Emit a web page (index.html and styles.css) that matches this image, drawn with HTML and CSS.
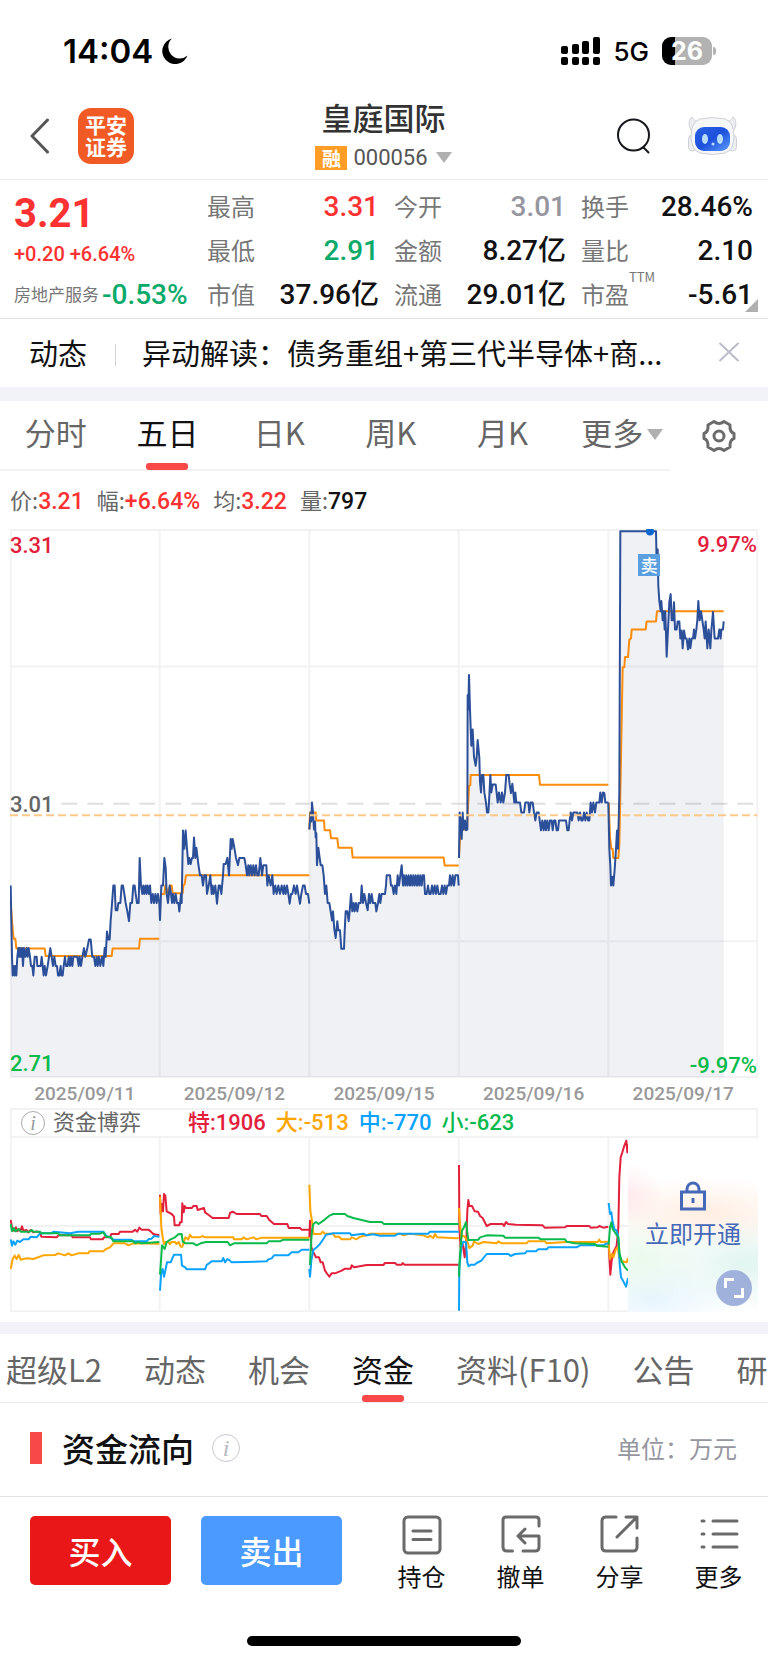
FILE: index.html
```html
<!DOCTYPE html>
<html lang="zh-CN">
<head>
    <meta charset="UTF-8">
    <meta name="viewport" content="width=device-width, initial-scale=1.0">
    <title>皇庭国际 000056</title>
    <link rel="stylesheet" href="styles.css">
</head>
<body>

    <div class="status-bar">
        <div class="status-left">
            <span class="clock">14:04</span>
            <svg class="moon" viewBox="0 0 26 26"><path d="M10 0.5A13 13 0 1 0 25.5 17.5A10.5 10.5 0 0 1 10 0.5Z" fill="#000"/></svg>
        </div>
        <div class="status-right">
            <svg class="signal" viewBox="0 0 39 28">
                <rect x="0" y="9" width="7" height="8" rx="2"/>
                <rect x="11" y="7" width="7" height="10" rx="2"/>
                <rect x="21" y="4" width="7" height="13" rx="2"/>
                <rect x="32" y="0" width="7" height="17" rx="2"/>
                <rect x="0" y="20" width="7" height="8" rx="2"/>
                <rect x="11" y="20" width="7" height="8" rx="2"/>
                <rect x="21" y="20" width="7" height="8" rx="2"/>
                <rect x="32" y="20" width="7" height="8" rx="2"/>
            </svg>
            <span class="network">5G</span>
            <span class="battery">26</span>
        </div>
    </div>

    <header class="header">
        <div class="header-left">
            <a class="back" href="#" aria-label="返回">
                <svg viewBox="0 0 20 36"><path d="M17.500 2L2 18L17.500 34" fill="none" stroke="#555" stroke-width="3" stroke-linecap="round" stroke-linejoin="round"/></svg>
            </a>
            <a class="logo" href="#">平安<br>证券</a>
        </div>
        <div class="stock">
            <h1 class="stock-name">皇庭国际</h1>
            <button class="stock-code"><span class="tag">融</span>000056<span class="arrow-down"></span></button>
        </div>
        <div class="header-right">
            <button class="search" aria-label="搜索">
                <svg viewBox="0 0 34 36"><circle cx="16.500" cy="17" r="15.500"/><path d="M26.500 29.500L31.500 34.500"/></svg>
            </button>
            <button class="robot" aria-label="智能助手">
                <svg viewBox="0 0 49 40">
                    <defs>
                        <linearGradient id="face" x1="0" y1="0" x2="1" y2="1">
                            <stop offset="0" stop-color="#2a62e4"/>
                            <stop offset="0.500" stop-color="#1d50dc"/>
                            <stop offset="1" stop-color="#5b9dfc"/>
                        </linearGradient>
                    </defs>
                    <g fill="#eceef2" stroke="#cdd0d6">
                        <path d="M3 14C0 9 1 3 4 1C6 5 8 6 14 5L10 13Z"/>
                        <path d="M46 14C49 9 48 3 45 1C43 5 41 6 35 5L39 13Z"/>
                        <rect x="0.500" y="19" width="8" height="16" rx="4"/>
                        <rect x="40.500" y="19" width="8" height="16" rx="4"/>
                        <path d="M12 3Q24.500 0 37 3Q46 6 46 20Q46 34 37 37Q24.500 40 12 37Q3 34 3 20Q3 6 12 3Z" fill="#f5f6f8"/>
                    </g>
                    <rect x="7" y="11" width="35" height="24" rx="9" fill="url(#face)"/>
                    <g fill="#b9dcff">
                        <ellipse cx="17" cy="23" rx="3" ry="5"/>
                        <ellipse cx="32" cy="23" rx="3" ry="5"/>
                        <circle cx="25" cy="28" r="1.500"/>
                    </g>
                </svg>
            </button>
        </div>
    </header>

    <section class="quote">
        <div class="quote-main">
            <div class="price">3.21</div>
            <div class="change">+0.20 +6.64%</div>
            <div class="industry">房地产服务<b>-0.53%</b></div>
        </div>
        <dl class="quote-col">
            <div><dt>最高</dt><dd class="up">3.31</dd></div>
            <div><dt>最低</dt><dd class="down">2.91</dd></div>
            <div><dt>市值</dt><dd>37.96亿</dd></div>
        </dl>
        <dl class="quote-col">
            <div><dt>今开</dt><dd class="flat">3.01</dd></div>
            <div><dt>金额</dt><dd>8.27亿</dd></div>
            <div><dt>流通</dt><dd>29.01亿</dd></div>
        </dl>
        <dl class="quote-col">
            <div><dt>换手</dt><dd>28.46%</dd></div>
            <div><dt>量比</dt><dd>2.10</dd></div>
            <div><dt>市盈<sup>TTM</sup></dt><dd>-5.61</dd></div>
        </dl>
    </section>

    <div class="news">
        <span class="news-tag">动态</span>
        <a class="news-title" href="#">异动解读：债务重组+第三代半导体+商...</a>
        <button class="news-close" aria-label="关闭">
            <svg viewBox="0 0 22 22"><path d="M1.500 2L20.500 20M20.500 2L1.500 20" stroke="#bcbccb" stroke-width="2"/></svg>
        </button>
    </div>

    <div class="period">
        <nav class="period-tabs">
            <a href="#">分时</a>
            <a href="#" class="active">五日</a>
            <a href="#">日K</a>
            <a href="#">周K</a>
            <a href="#">月K</a>
            <a href="#" class="more">更多<span class="arrow-down"></span></a>
        </nav>
        <button class="settings" aria-label="设置">
            <svg viewBox="0 0 34 34">
                <path d="M12 2.500Q14.500 4.500 17 4.500T22 2.500L28 6Q27.500 13 32 14.500V19.500Q27.500 21 28 28L22 31.500Q19.500 29.500 17 29.500T12 31.500L6 28Q6.500 21 2 19.500V14.500Q6.500 13 6 6Z"/>
                <circle cx="17" cy="17" r="5"/>
            </svg>
        </button>
    </div>

    <p class="readout">
        <span>价:<b class="up">3.21</b></span>
        <span>幅:<b class="up">+6.64%</b></span>
        <span>均:<b class="up">3.22</b></span>
        <span>量:<b>797</b></span>
    </p>

    <section class="charts">
        <div class="chart">
            <svg id="price-chart" class="price-chart" viewBox="30 24 2244 1509" preserveAspectRatio="none">
                <path class="grid" d="M32 27H2272V1530H32ZM32 402H2272M32 1157H2272M479 27V1530M928 27V1530M1376 27V1530M1825 27V1530"/>
                <path class="grid dash-close" d="M184 779H2272"/>
                <g class="lines"></g>
                <path class="dash-cost" d="M30 811H2272"/>
                <ellipse cx="1950" cy="31" rx="12" ry="11" fill="#0a66d0"/>
            </svg>
            <span class="label label-high">3.31</span>
            <span class="label label-mid">3.01</span>
            <span class="label label-low">2.71</span>
            <span class="label label-high-pct">9.97%</span>
            <span class="label label-low-pct">-9.97%</span>
            <span class="sell-mark">卖</span>
        </div>

        <div class="dates">
            <span>2025/09/11</span>
            <span>2025/09/12</span>
            <span>2025/09/15</span>
            <span>2025/09/16</span>
            <span>2025/09/17</span>
        </div>

        <div class="flow-head">
            <span class="info">i</span>
            <span class="flow-name">资金博弈</span>
            <span class="huge">特:1906</span>
            <span class="large">大:-513</span>
            <span class="medium">中:-770</span>
            <span class="small">小:-623</span>
        </div>

        <div class="chart">
            <svg id="flow-chart" class="flow-chart" viewBox="30 172 2244 522" preserveAspectRatio="none">
                <path class="grid" d="M32 170V692H2272V170M32 436H2272M479 172V692M928 172V692M1376 172V692M1825 172V692"/>
                <g class="lines"></g>
            </svg>
            <a class="unlock" href="#">
                <svg viewBox="0 0 26 30"><path d="M7 11V8A6 6 0 0 1 19 8V11M1.500 11H24.500V28H1.500ZM13 17V22" fill="none" stroke="#4668b8" stroke-width="3"/></svg>
                立即开通
            </a>
            <button class="expand" aria-label="全屏">
                <svg viewBox="0 0 36 36"><path d="M9.500 18V9.500H18M18 26.500H26.500V18" fill="none" stroke="#fff" stroke-width="3"/></svg>
            </button>
        </div>
    </section>

    <nav class="detail-tabs">
        <a href="#">超级L2</a>
        <a href="#">动态</a>
        <a href="#">机会</a>
        <a href="#" class="active">资金</a>
        <a href="#">资料(F10)</a>
        <a href="#">公告</a>
        <a href="#">研报</a>
    </nav>

    <section class="fund">
        <h2 class="fund-title">资金流向</h2>
        <span class="info">i</span>
        <span class="unit">单位：万元</span>
    </section>

    <footer class="toolbar">
        <button class="trade buy">买入</button>
        <button class="trade sell">卖出</button>
        <div class="tools">
            <a href="#">
                <svg viewBox="0 0 40 40"><rect x="2" y="2" width="36" height="36" rx="4"/><path d="M11 16H29M11 24.500H29"/></svg>
                持仓
            </a>
            <a href="#">
                <svg viewBox="0 0 40 40"><path d="M38 11V5Q38 2 35 2H5Q2 2 2 5V32Q2 36 6 36H11.500M22 36H34Q38 36 38 32V21H18M24 14L17 21L24 28"/></svg>
                撤单
            </a>
            <a href="#">
                <svg viewBox="0 0 40 40"><path d="M16 2H6Q2 2 2 6V32Q2 36 6 36H33Q37 36 37 32V23M26 2H37V13M37 2L17 22"/></svg>
                分享
            </a>
            <a href="#">
                <svg viewBox="0 0 40 40"><path d="M3 6H5M14 6H38M3 19H5M14 19H38M3 32H5M14 32H38"/></svg>
                更多
            </a>
        </div>
    </footer>
    <div class="home-bar"></div>

    <script src="chart.js"></script>
</body>
</html>
```
FILE: styles.css
```css
* {
    box-sizing: border-box;
}

body {
    margin: 0;
    background-color: #fff;
    color: #111;
    font-family: "Noto Sans CJK SC", sans-serif;
    font-size: 24px;
    overflow-x: hidden;
}

a {
    color: inherit;
    text-decoration: none;
}

button {
    padding: 0;
    border: none;
    background: none;
    color: inherit;
    font: inherit;
    cursor: pointer;
}

svg {
    display: block;
}

h1, h2, p, dl, dd {
    margin: 0;
}

.up {
    color: #fc3232;
}

.down {
    color: #0aaa6a;
}

.flat {
    color: #96969f;
}

.arrow-down {
    display: inline-block;
    border: 8px solid transparent;
    border-top: 11px solid #b0b0b0;
    border-bottom: none;
}

/* status bar */
.status-bar {
    display: flex;
    justify-content: space-between;
    align-items: center;
    height: 90px;
    padding: 12px 56px 0 63px;
    font-family: Inter, sans-serif;
    color: #000;
}

.status-left,
.status-right {
    display: flex;
    align-items: center;
}

.clock {
    font-size: 33px;
    font-weight: 600;
}

.moon {
    width: 26px;
    height: 26px;
    margin-left: 9px;
}

.signal {
    width: 39px;
    height: 28px;
}

.network {
    margin: 0 13px;
    font-size: 26px;
    font-weight: 500;
}

.battery {
    position: relative;
    width: 50px;
    height: 28px;
    border-radius: 9px;
    background: linear-gradient(90deg, #000 13px, #b2b2b2 13px);
    color: #fff;
    font-size: 25px;
    font-weight: 700;
    line-height: 28px;
    text-align: center;
}

.battery::after {
    content: "";
    position: absolute;
    left: 51px;
    top: 10px;
    width: 3px;
    height: 8px;
    border-radius: 0 3px 3px 0;
    background-color: #b2b2b2;
}

/* header */
.header {
    display: grid;
    grid-template-columns: 1fr auto 1fr;
    align-items: center;
    height: 90px;
    padding: 3px 31px 0 30px;
    border-bottom: 1px solid #ececee;
}

.header-left,
.header-right {
    display: flex;
    align-items: center;
}

.header-right {
    justify-content: flex-end;
    gap: 37px;
}

.back svg {
    width: 20px;
    height: 36px;
}

.logo {
    width: 56px;
    height: 56px;
    margin-left: 28px;
    padding-top: 5px;
    border-radius: 13px;
    background-color: #f15a24;
    color: #fff;
    font-size: 21px;
    font-weight: 700;
    line-height: 22px;
    text-align: center;
}

.stock {
    text-align: center;
}

.stock-name {
    color: #333;
    font-size: 31px;
    font-weight: 500;
    line-height: 43px;
}

.stock-code {
    display: flex;
    align-items: center;
    color: #555;
    font-family: Roboto, sans-serif;
    font-size: 22px;
    line-height: 40px;
}

.tag {
    width: 32px;
    height: 24px;
    margin-right: 6px;
    background-color: #ff9d26;
    color: #fff;
    font-family: "Noto Sans CJK SC", sans-serif;
    font-size: 19px;
    font-weight: 700;
    line-height: 23px;
}

.stock-code .arrow-down {
    margin-left: 8px;
}

.search svg {
    width: 34px;
    height: 36px;
    fill: none;
    stroke: #15171c;
    stroke-width: 2;
    stroke-linecap: round;
}

.robot svg {
    width: 49px;
    height: 40px;
}

/* quote */
.quote {
    position: relative;
    display: grid;
    grid-template-columns: 178px 1fr 1fr 1fr;
    gap: 15px;
    padding: 5px 15px 1px 14px;
    border-bottom: 1px solid #dfe0e6;
}

.quote::after {
    content: "";
    position: absolute;
    right: 10px;
    bottom: 6px;
    border-left: 13px solid transparent;
    border-bottom: 13px solid #b0b0b0;
}

.quote-main {
    display: grid;
    grid-template-rows: 56px 26px 50px;
    align-items: center;
    color: #fc3232;
    font-family: Roboto, "Noto Sans CJK SC", sans-serif;
    white-space: nowrap;
}

.price {
    font-size: 40px;
    font-weight: 700;
}

.change {
    font-size: 20px;
    font-weight: 500;
}

.industry {
    display: flex;
    align-items: center;
    gap: 3px;
    padding-top: 6px;
    color: #777;
    font-size: 17px;
    line-height: 44px;
}

.industry b {
    color: #0aaa6a;
    font-size: 28px;
    font-weight: 500;
}

.quote-col > div {
    display: flex;
    justify-content: space-between;
    height: 44px;
    line-height: 44px;
    white-space: nowrap;
}

.quote-col dt {
    position: relative;
    color: #777;
    line-height: 42px;
}

.quote-col dd {
    font-family: Roboto, "Noto Sans CJK SC", sans-serif;
    font-size: 28px;
    font-weight: 500;
}

.quote-col sup {
    position: absolute;
    left: 48px;
    top: -4px;
    font-size: 13px;
    line-height: 16px;
}

/* news */
.news {
    display: flex;
    align-items: center;
    height: 82px;
    padding: 0 28px 2px 29px;
    border-bottom: 14px solid #f2f3f9;
    font-size: 29px;
}

.news-tag {
    margin-right: 28px;
}

.news-title {
    position: relative;
    flex: 1;
    padding-left: 27px;
    white-space: nowrap;
}

.news-title::before {
    content: "";
    position: absolute;
    left: 0;
    top: 13px;
    width: 1px;
    height: 22px;
    background-color: #d4d4da;
}

.news-close svg {
    width: 22px;
    height: 22px;
}

/* period tabs */
.period {
    display: flex;
    align-items: center;
    height: 70px;
}

.period-tabs {
    flex: 1;
    display: grid;
    grid-template-columns: repeat(6, 1fr);
    height: 69px;
    border-bottom: 2px solid #f2f2f4;
    color: #666;
    font-size: 31px;
    line-height: 59px;
    text-align: center;
}

.period-tabs a,
.detail-tabs a {
    position: relative;
    white-space: nowrap;
}

.period-tabs .more {
    padding-left: 16px;
}

.period-tabs .arrow-down {
    margin-left: 4px;
    vertical-align: 5px;
}

.period-tabs .active,
.detail-tabs .active {
    color: #111;
}

.active::after {
    content: "";
    position: absolute;
    left: calc(50% - 21px);
    bottom: -1px;
    width: 42px;
    height: 7px;
    border-radius: 3px;
    background-color: #f94848;
}

.settings {
    width: 98px;
}

.settings svg {
    width: 34px;
    height: 34px;
    margin: 0 auto;
    fill: none;
    stroke: #6b6b6b;
    stroke-width: 3;
    stroke-linejoin: round;
}

/* chart */
.readout {
    display: flex;
    gap: 13px;
    height: 58px;
    padding-left: 10px;
    color: #666;
    font-size: 22px;
    line-height: 56px;
}

.readout b {
    font-family: Roboto, sans-serif;
    font-size: 23px;
    font-weight: 500;
}

.readout b:not(.up) {
    color: #111;
}

.charts {
    padding: 0 10px 10px;
    border-bottom: 12px solid #f2f3f9;
}

.chart {
    position: relative;
}

.price-chart,
.flow-chart {
    width: 100%;
}

.price-chart {
    aspect-ratio: 748 / 549;
}

.flow-chart {
    aspect-ratio: 748 / 174;
}

.price-chart *,
.flow-chart * {
    fill: none;
    vector-effect: non-scaling-stroke;
}

.price-chart ellipse {
    fill: #0a66d0;
}

.grid {
    stroke: #f2f2f3;
    stroke-width: 2;
}

.grid.dash-close {
    stroke: #dfdfdf;
    stroke-dasharray: 16 10;
}

.dash-cost {
    stroke: #fdc98a;
    stroke-width: 2;
    stroke-dasharray: 8 4;
}

.price-chart .area {
    fill: rgba(60, 75, 130, 0.08);
}

.lines polyline {
    stroke-width: 2;
    stroke-linejoin: round;
}

.line-price { stroke: #2c4f99; }
.line-average { stroke: #fb8c0c; }
.line-huge { stroke: #e2203c; }
.line-large { stroke: #ffa500; }
.line-medium { stroke: #0aa2ff; }
.line-small { stroke: #0aba4c; }

.label {
    position: absolute;
    font-family: Roboto, sans-serif;
    font-size: 22px;
    font-weight: 500;
    line-height: 24px;
}

.label-high {
    left: 0;
    top: 5px;
    color: #e2203c;
}

.label-mid {
    left: 0;
    top: 48%;
    color: #666;
}

.label-low {
    left: 0;
    bottom: 2px;
    color: #0aba4c;
}

.label-high-pct {
    right: 1px;
    top: 4px;
    color: #e2203c;
}

.label-low-pct {
    right: 1px;
    bottom: 0;
    color: #0aba4c;
}

.sell-mark {
    position: absolute;
    left: 84%;
    top: 25px;
    width: 22px;
    height: 22px;
    background-color: #5b9fe0;
    color: #fff;
    font-size: 17px;
    font-weight: 500;
    line-height: 21px;
    text-align: center;
}

.dates {
    display: grid;
    grid-template-columns: repeat(5, 1fr);
    height: 30px;
    color: #999;
    font-family: Roboto, sans-serif;
    font-size: 19px;
    font-weight: 500;
    line-height: 32px;
    text-align: center;
}

.flow-head {
    display: flex;
    align-items: center;
    gap: 10px;
    height: 30px;
    padding-left: 9px;
    border: 2px solid #f2f2f2;
    font-family: Roboto, "Noto Sans CJK SC", sans-serif;
    font-size: 22px;
    font-weight: 500;
    line-height: 26px;
}

.info {
    width: 24px;
    height: 24px;
    border: 1px solid #aaa;
    border-radius: 50%;
    color: #999;
    font-family: "Liberation Serif", serif;
    font-size: 20px;
    font-style: italic;
    line-height: 22px;
    text-align: center;
}

.flow-name {
    margin: 0 37px 0 -2px;
    color: #666;
    font-weight: 400;
}

.huge { color: #e2203c; }
.large { color: #ffa500; }
.medium { color: #0aa2ff; }
.small { color: #0aba4c; }

.unlock {
    position: absolute;
    right: 0;
    top: 1px;
    bottom: 0;
    display: flex;
    flex-direction: column;
    align-items: center;
    width: 130px;
    padding-top: 42px;
    background:
        radial-gradient(ellipse at 0 56px, rgba(255, 215, 222, 0.5), transparent 36px),
        radial-gradient(ellipse 110px 36px at 60% 74px, rgba(255, 226, 206, 0.6), transparent),
        radial-gradient(ellipse 100px 50px at 90% 124px, rgba(205, 238, 230, 0.6), transparent),
        radial-gradient(ellipse 60px 50px at 10% 120px, rgba(220, 246, 224, 0.6), transparent),
        radial-gradient(ellipse 80px 36px at 20% 160px, rgba(215, 238, 255, 0.6), transparent),
        #fff;
    color: #4668b8;
    line-height: 40px;
}

.unlock svg {
    width: 26px;
    height: 30px;
    margin-bottom: 2px;
}

.expand {
    position: absolute;
    right: 6px;
    bottom: 6px;
    width: 36px;
    height: 36px;
    border-radius: 50%;
    background-color: #a0b2dc;
}

/* detail tabs */
.detail-tabs {
    display: flex;
    gap: 42px;
    height: 69px;
    padding-left: 6px;
    border-bottom: 1px solid #ececee;
    overflow: hidden;
    color: #666;
    font-size: 31px;
    line-height: 69px;
}

.detail-tabs .active::after {
    bottom: 0;
}

.fund {
    display: flex;
    align-items: center;
    height: 94px;
    padding: 0 31px 4px 30px;
    border-bottom: 1px solid #e4e4e6;
}

.fund-title {
    display: flex;
    align-items: center;
    gap: 20px;
    font-size: 33px;
    font-weight: 500;
}

.fund-title::before {
    content: "";
    width: 12px;
    height: 32px;
    background-color: #f94848;
}

.fund .info {
    width: 28px;
    height: 28px;
    margin-left: 18px;
    border-color: #c8c8d2;
    color: #b8b8c2;
    font-size: 24px;
    line-height: 26px;
}

.unit {
    margin-left: auto;
    color: #96969f;
}

/* bottom toolbar */
.toolbar {
    display: flex;
    align-items: flex-start;
    gap: 30px;
    height: 139px;
    padding: 19px 0 0 30px;
}

.trade {
    width: 141px;
    height: 69px;
    padding-bottom: 2px;
    border-radius: 5px;
    color: #fff;
    font-size: 32px;
    font-weight: 500;
}

.buy {
    background-color: #ea1718;
}

.sell {
    background-color: #4a9aff;
}

.tools {
    flex: 1;
    display: grid;
    grid-template-columns: repeat(4, 1fr);
    line-height: 42px;
    text-align: center;
}

.tools svg {
    width: 40px;
    height: 40px;
    margin: -1px auto 0;
    fill: none;
    stroke: #6a6a6a;
    stroke-width: 3;
    stroke-linecap: round;
    stroke-linejoin: round;
}

.home-bar {
    width: 274px;
    height: 10px;
    margin: 0 auto 17px;
    border-radius: 5px;
    background-color: #000;
}
```
FILE: chart.js
```javascript
// one entry per trading day
const price = [
    "32,1004 36,1200 38,1251 42,1225 44,1251 46,1225 49,1251 52,1200 55,1176 58,1200 60,1176 63,1200 66,1176 69,1225 72,1176 76,1200 80,1176 83,1200 86,1176 90,1200 93,1225 97,1225 100,1251 104,1200 110,1200 112,1225 122,1225 125,1200 128,1225 131,1251 134,1225 138,1251 143,1225 147,1200 151,1176 155,1200 159,1225 163,1200 167,1225 171,1225 174,1251 178,1251 182,1225 184,1251 188,1251 191,1225 195,1200 198,1225 203,1225 206,1200 210,1225 213,1200 217,1225 220,1200 232,1200 236,1225 239,1200 243,1225 247,1200 252,1176 256,1200 262,1176 267,1152 272,1152 277,1200 282,1200 286,1225 290,1200 293,1225 297,1200 301,1225 306,1200 310,1225 314,1176 317,1200 321,1130 325,1152 329,1152 332,1100 336,1054 340,1004 344,1004 347,1072 352,1072 355,1052 361,1052 365,1004 369,1004 373,1027 377,1052 382,1075 387,1102 391,1052 396,1052 400,1004 404,1004 407,1027 411,1052 416,1052 419,928 423,1004 427,1027 430,1004 433,1027 437,1004 440,1027 443,1004 447,1027 450,1004 454,1052 458,1027 462,1052 466,1027 470,1052 474,1027 478,1052 480,1100",
    "480,1100 484,1004 489,1004 493,928 497,955 500,1027 504,1052 509,1004 513,1027 516,1052 519,1027 523,1052 527,1027 531,1052 535,1052 538,1075 543,1027 545,1052 549,853 553,903 557,853 561,903 565,945 568,928 572,945 576,928 579,928 582,872 586,928 589,900 595,945 600,976 605,976 609,1004 613,976 618,976 621,1027 626,1004 631,976 635,1027 638,1004 641,1027 646,1004 651,1054 656,1004 660,1004 664,1027 669,976 671,945 677,945 682,928 687,976 692,876 695,903 698,876 703,900 708,928 714,948 718,928 733,928 737,948 741,976 745,948 748,976 752,948 756,976 760,948 764,976 768,948 772,976 776,976 781,928 786,976 790,948 799,948 802,1004 806,976 812,1004 817,976 821,1027 826,1004 830,1027 835,1004 840,1027 845,1004 850,1027 853,1004 857,1027 861,1004 865,1027 869,1054 873,1027 877,1027 882,1004 887,1027 891,1004 895,1027 900,1054 904,1027 909,1004 914,1004 918,1027 924,1027 928,1054",
    "928,850 932,803 934,828 936,776 939,803 942,850 945,828 947,872 949,860 951,948 955,900 959,928 962,948 967,948 971,976 975,1027 979,1004 983,1052 988,1052 992,1075 996,1100 999,1075 1003,1125 1007,1148 1012,1102 1015,1127 1020,1127 1024,1178 1032,1178 1034,1130 1037,1075 1042,1075 1046,1102 1049,1075 1053,1027 1057,1075 1061,1052 1064,1075 1068,1052 1072,1075 1076,1052 1082,1052 1085,1004 1089,1052 1093,1027 1098,1052 1103,1072 1107,1027 1111,1052 1115,1027 1119,1052 1126,1052 1129,1075 1134,1052 1138,1027 1141,1052 1145,1027 1155,1027 1158,1004 1160,976 1170,976 1173,1004 1177,1004 1181,1027 1185,1004 1189,1027 1193,976 1197,1004 1201,976 1205,948 1209,1004 1212,976 1216,1004 1219,976 1223,1004 1226,976 1230,1004 1233,976 1237,1004 1240,976 1244,1004 1247,976 1251,1004 1254,976 1258,1004 1261,976 1265,1004 1268,976 1272,976 1275,1027 1280,1027 1284,1004 1288,1027 1292,1027 1296,1004 1300,1027 1304,1004 1308,1027 1312,1004 1316,1027 1322,1027 1326,1004 1330,1027 1334,1004 1338,1027 1342,1004 1347,1004 1350,976 1354,1004 1358,976 1362,1004 1366,976 1374,976 1376,1004",
    "1377,928 1379,803 1382,828 1385,876 1388,803 1391,850 1395,825 1398,852 1402,850 1403,480 1405,520 1407,425 1410,520 1414,620 1418,575 1422,650 1427,675 1430,652 1433,604 1438,652 1440,720 1443,748 1446,700 1450,700 1453,748 1458,776 1461,803 1465,803 1467,776 1471,700 1474,748 1478,726 1487,726 1490,750 1493,776 1497,748 1502,776 1506,748 1510,776 1515,748 1519,700 1526,700 1529,726 1533,750 1537,724 1540,750 1543,776 1546,748 1549,776 1560,776 1564,803 1572,803 1576,776 1585,776 1588,803 1592,776 1598,776 1602,803 1606,825 1610,803 1616,803 1619,825 1623,852 1627,825 1631,852 1635,825 1638,852 1642,825 1646,852 1650,825 1655,825 1658,852 1662,825 1666,825 1670,852 1674,852 1677,825 1698,825 1702,852 1706,852 1709,825 1712,803 1716,825 1720,803 1732,803 1736,825 1740,803 1744,825 1748,825 1752,803 1756,825 1760,803 1764,825 1768,825 1772,776 1776,803 1780,776 1785,803 1789,776 1798,776 1801,748 1805,776 1809,748 1813,750 1816,776 1825,776",
    "1825,776 1828,903 1831,950 1833,1004 1837,980 1840,1004 1844,960 1848,903 1851,853 1854,903 1858,750 1861,30 1968,30 1970,120 1973,80 1975,180 1978,222 1982,250 1984,222 1988,275 1991,250 1994,300 1996,250 2000,375 2004,300 2008,225 2012,203 2015,275 2019,275 2022,225 2025,300 2030,300 2033,278 2038,278 2041,325 2045,303 2048,352 2052,303 2056,325 2060,325 2064,355 2068,325 2071,352 2075,325 2079,325 2082,300 2085,325 2089,300 2092,275 2095,222 2099,275 2103,250 2107,275 2111,300 2114,325 2117,278 2122,352 2126,300 2131,352 2134,303 2139,252 2144,325 2154,325 2158,300 2162,325 2164,300 2169,300 2171,278"
];

const average = [
    "32,1050 38,1125 41,1150 46,1150 49,1177 134,1177 137,1198 335,1198 338,1177 417,1177 420,1150 478,1150",
    "480,1027 493,1027 496,1004 505,1027 510,1004 515,1004 518,1025 548,1025 550,1004 554,1000 558,976 928,976",
    "928,850 930,803 947,803 949,825 972,825 974,852 990,852 993,874 1012,874 1015,900 1055,900 1058,927 1331,927 1334,949 1376,949",
    "1377,928 1381,850 1401,850 1407,730 1411,728 1412,700 1617,700 1620,727 1825,727",
    "1826,776 1830,870 1834,903 1838,903 1840,928 1855,928 1858,890 1862,700 1868,404 1873,404 1875,376 1884,376 1888,328 1893,325 1895,300 1937,300 1940,278 1968,278 1971,250 2171,250"
];

const flow = {
    huge: [
        "32,418 36,440 42,450 48,440 52,452 58,445 62,450 66,437 70,450 80,448 85,455 92,448 100,455 110,452 120,455 124,468 170,470 175,464 215,464 218,470 270,470 273,476 308,476 312,470 330,470 334,460 356,460 360,453 398,453 405,447 412,453 418,441 424,447 445,447 452,452 460,460 478,464",
        "480,342 482,400 486,370 489,392 492,340 496,345 500,392 515,400 522,408 524,434 538,434 540,425 545,425 547,368 551,395 554,376 558,382 576,382 580,376 590,376 593,388 612,382 615,395 622,400 638,412 686,412 690,397 698,393 710,400 780,400 784,406 800,406 808,418 822,430 862,430 866,442 900,442 905,447 928,447",
        "928,470 930,420 934,500 940,515 948,530 957,530 962,545 968,545 975,570 982,580 988,588 995,578 1005,578 1025,570 1035,564 1052,564 1055,554 1063,560 1100,553 1150,553 1155,547 1185,547 1190,552 1205,552 1208,547 1213,552 1376,552",
        "1377,253 1378,440 1382,500 1388,490 1394,530 1399,480 1402,390 1405,358 1408,376 1416,376 1424,392 1434,393 1440,406 1448,412 1460,436 1472,430 1508,430 1512,436 1518,424 1524,430 1548,432 1628,434 1634,441 1695,440 1700,436 1768,436 1772,441 1793,440 1798,436 1810,441 1825,438",
        "1826,490 1831,582 1835,540 1840,515 1850,495 1855,440 1858,290 1862,230 1867,215 1872,198 1879,180 1882,215 1884,190"
    ],
    large: [
        "32,565 38,535 44,525 50,535 56,523 62,537 80,533 100,535 130,524 165,523 175,518 195,524 205,518 215,524 235,518 265,518 268,512 310,512 318,505 330,500 340,488 375,488 385,494 400,488 478,489",
        "480,348 484,440 488,470 492,490 496,484 505,484 510,490 515,484 525,484 530,490 536,484 542,498 547,498 556,470 565,476 570,462 575,470 600,470 608,466 615,470 700,470 702,476 725,476 730,470 740,476 760,470 770,476 785,471 928,471",
        "928,312 931,390 936,420 940,460 962,460 968,453 975,459 1000,459 1005,468 1018,468 1024,476 1050,476 1055,470 1070,476 1080,468 1100,464 1110,459 1200,459 1210,464 1230,459 1270,464 1285,470 1290,465 1300,472 1305,460 1312,470 1370,473 1376,471",
        "1377,382 1380,430 1384,470 1390,465 1396,470 1404,488 1408,502 1418,495 1422,482 1435,490 1450,484 1490,488 1495,482 1505,488 1580,488 1585,482 1635,482 1640,488 1700,484 1793,484 1798,477 1802,484 1825,483",
        "1826,492 1830,535 1836,520 1840,530 1848,505 1854,500 1857,530 1862,541 1880,545 1884,532"
    ],
    medium: [
        "32,476 36,495 40,482 46,492 52,480 60,484 70,476 86,476 92,468 110,470 120,458 155,458 160,453 210,458 235,453 310,453 318,465 330,470 340,477 395,477 400,482 440,482 445,476 455,474 462,466 478,468",
        "480,630 484,570 488,565 492,588 498,560 501,545 512,545 522,522 543,522 546,555 556,560 560,566 615,566 620,553 635,542 665,542 670,532 675,545 682,535 690,540 695,545 800,542 805,536 815,533 822,524 865,524 875,515 895,515 905,507 928,507",
        "928,565 930,588 934,540 940,508 950,500 960,490 970,475 978,462 1000,458 1050,458 1055,464 1090,459 1100,464 1120,461 1140,465 1185,465 1195,459 1285,459 1290,453 1376,453",
        "1377,690 1378,560 1384,500 1390,483 1398,485 1402,545 1406,557 1412,552 1424,552 1430,547 1444,540 1460,520 1525,520 1532,526 1545,520 1575,518 1580,512 1608,512 1615,506 1640,506 1645,500 1730,500 1740,494 1810,494 1818,489 1825,488",
        "1826,367 1830,400 1834,395 1838,425 1843,445 1850,450 1855,470 1859,550 1863,590 1870,602 1878,618 1884,592"
    ],
    small: [
        "32,430 36,452 42,442 46,452 56,445 62,453 90,453 95,448 100,453 120,453 124,458 175,458 180,464 270,464 273,459 300,459 310,455 318,468 334,470 340,482 400,482 405,488 415,484 425,488 478,484",
        "480,582 483,540 486,494 494,505 500,484 512,476 525,470 535,461 545,460 548,482 556,488 580,488 590,494 602,488 618,484 683,484 690,494 702,488 800,488 806,482 840,482 850,477 928,477",
        "930,553 933,490 936,450 940,430 948,424 956,430 975,416 988,405 1000,400 1035,400 1042,406 1060,412 1085,418 1110,424 1145,424 1152,430 1376,430",
        "1377,588 1380,520 1386,450 1392,440 1398,424 1402,455 1405,478 1435,477 1440,470 1460,464 1510,465 1515,471 1615,471 1622,476 1695,476 1700,483 1725,488 1785,490 1790,495 1825,498",
        "1826,492 1830,440 1834,425 1838,445 1848,460 1855,470 1859,520 1866,545 1875,560 1884,570"
    ]
};

const PRICE_BOTTOM = 1530;

function addShape(parent, type, points, className) {
    const shape = document.createElementNS("http://www.w3.org/2000/svg", type);
    shape.setAttribute("points", points);
    shape.setAttribute("class", className);
    parent.appendChild(shape);
}

function drawPrice() {
    const lines = document.querySelector("#price-chart .lines");

    price.forEach(points => {
        const list = points.split(" ");
        const firstX = list[0].split(",")[0];
        const lastX = list[list.length - 1].split(",")[0];
        const area = `${firstX},${PRICE_BOTTOM} ${points} ${lastX},${PRICE_BOTTOM}`;
        addShape(lines, "polygon", area, "area");
    });
    average.forEach(points => addShape(lines, "polyline", points, "line-average"));
    price.forEach(points => addShape(lines, "polyline", points, "line-price"));
}

function drawFlow() {
    const lines = document.querySelector("#flow-chart .lines");

    Object.keys(flow).forEach(name => {
        flow[name].forEach(points => addShape(lines, "polyline", points, "line-" + name));
    });
}

drawPrice();
drawFlow();
```
